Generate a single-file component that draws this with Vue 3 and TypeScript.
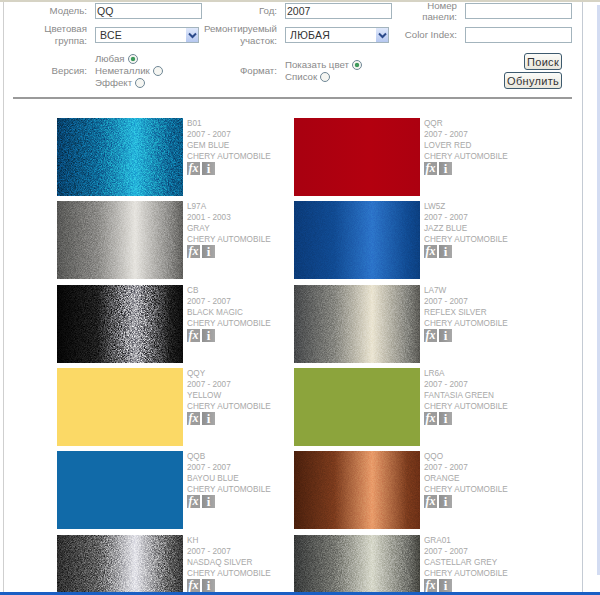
<script setup lang="ts">
interface Paint {
  code: string
  years: string
  name: string
  bg: string
  grain: number
}

// metallic finishes: dark edge, bright band a bit right of centre, dark edge
function sheen(edgeL: string, mid: string, edgeR: string, low = edgeL): string {
  return `linear-gradient(90deg, ${edgeL} 0%, ${low} 32%, ${mid} 62%, ${low} 90%, ${edgeR} 100%)`
}

const paints: Paint[] = [
  { code: 'B01', years: '2007 - 2007', name: 'GEM BLUE', bg: sheen('#07406a', '#26b6dc', '#0a5f8c', '#0e6a98'), grain: 0.5 },
  { code: 'QQR', years: '2007 - 2007', name: 'LOVER RED', bg: 'linear-gradient(90deg, #a80010, #b3000f 60%, #ac0010)', grain: 0 },
  { code: 'L97A', years: '2001 - 2003', name: 'GRAY', bg: sheen('#575755', '#e6e4df', '#605f5c', '#8a8986'), grain: 0.22 },
  { code: 'LW5Z', years: '2007 - 2007', name: 'JAZZ BLUE', bg: sheen('#0a3a78', '#2c74ca', '#0b3f80', '#104a92'), grain: 0.08 },
  { code: 'CB', years: '2007 - 2007', name: 'BLACK MAGIC', bg: sheen('#050505', '#a4a4aa', '#0c0c0c', '#1e1e1e'), grain: 1 },
  { code: 'LA7W', years: '2007 - 2007', name: 'REFLEX SILVER', bg: sheen('#46484a', '#ebe5d2', '#5a5954', '#85857f'), grain: 0.22 },
  { code: 'QQY', years: '2007 - 2007', name: 'YELLOW', bg: '#fbd966', grain: 0 },
  { code: 'LR6A', years: '2007 - 2007', name: 'FANTASIA GREEN', bg: '#8ca43c', grain: 0 },
  { code: 'QQB', years: '2007 - 2007', name: 'BAYOU BLUE', bg: '#116aa8', grain: 0 },
  { code: 'QQO', years: '2007 - 2007', name: 'ORANGE', bg: sheen('#4a1f0c', '#ea9c6a', '#6c2f15', '#7a3a1c'), grain: 0.1 },
  { code: 'KH', years: '2007 - 2007', name: 'NASDAQ SILVER', bg: sheen('#2e2e2e', '#e4e4ea', '#3a3a3a', '#5e5e5e'), grain: 0.7 },
  { code: 'GRA01', years: '2007 - 2007', name: 'CASTELLAR GREY', bg: sheen('#383a3a', '#d8d9cb', '#44443e', '#74756f'), grain: 0.3 }
]
</script>

<template>
  <div class="window">
    <svg class="defs" width="0" height="0">
      <filter id="grain" x="0" y="0" width="100%" height="100%" color-interpolation-filters="sRGB">
        <feTurbulence type="fractalNoise" baseFrequency="1.3" numOctaves="1" seed="9" />
        <feColorMatrix type="saturate" values="0" />
        <feComponentTransfer>
          <feFuncR type="linear" slope="2.4" intercept="-0.7" />
          <feFuncG type="linear" slope="2.4" intercept="-0.7" />
          <feFuncB type="linear" slope="2.4" intercept="-0.7" />
          <feFuncA type="linear" slope="0" intercept="1" />
        </feComponentTransfer>
      </filter>
    </svg>

    <div class="strip-top"></div>

    <div class="middle">
      <main class="content">
        <form class="filters" @submit.prevent>
          <label class="lbl">Модель:</label>
          <div class="field"><input class="txt" type="text" value="QQ" /></div>
          <label class="lbl">Год:</label>
          <div class="field"><input class="txt" type="text" value="2007" /></div>
          <label class="lbl tight">Номер<br />панели:</label>
          <div class="field"><input class="txt" type="text" /></div>

          <label class="lbl">Цветовая<br />группа:</label>
          <div class="field">
            <div class="select-wrap">
              <select class="sel"><option>ВСЕ</option></select>
              <span class="sel-btn">
                <svg width="9" height="7" viewBox="0 0 9 7"><path d="M1 1.5 L4.5 5 L8 1.5" fill="none" stroke="#2b4a8a" stroke-width="2" /></svg>
              </span>
            </div>
          </div>
          <label class="lbl">Ремонтируемый<br />участок:</label>
          <div class="field">
            <div class="select-wrap">
              <select class="sel"><option>ЛЮБАЯ</option></select>
              <span class="sel-btn">
                <svg width="9" height="7" viewBox="0 0 9 7"><path d="M1 1.5 L4.5 5 L8 1.5" fill="none" stroke="#2b4a8a" stroke-width="2" /></svg>
              </span>
            </div>
          </div>
          <label class="lbl">Color Index:</label>
          <div class="field"><input class="txt" type="text" /></div>

          <label class="lbl">Версия:</label>
          <div class="field radios">
            <label class="radio">Любая <input type="radio" name="ver" checked /></label>
            <label class="radio">Неметаллик <input type="radio" name="ver" /></label>
            <label class="radio">Эффект <input type="radio" name="ver" /></label>
          </div>
          <label class="lbl">Формат:</label>
          <div class="field radios">
            <label class="radio">Показать цвет <input type="radio" name="fmt" checked /></label>
            <label class="radio">Список <input type="radio" name="fmt" /></label>
          </div>
          <div class="actions">
            <button class="btn" type="submit">Поиск</button>
            <button class="btn" type="reset">Обнулить</button>
          </div>
        </form>

        <hr class="rule" />

        <section class="paints">
          <article v-for="p in paints" :key="p.code" class="paint">
            <div class="swatch" :style="{ background: p.bg }">
              <svg v-if="p.grain" class="grain" :style="{ opacity: p.grain }" width="126" height="78">
                <rect width="126" height="78" filter="url(#grain)" />
              </svg>
            </div>
            <div class="info">
              <div>{{ p.code }}</div>
              <div>{{ p.years }}</div>
              <div>{{ p.name }}</div>
              <div>CHERY AUTOMOBILE</div>
              <div class="tools">
                <span class="tool fx">fx</span>
                <span class="tool inf">i</span>
              </div>
            </div>
          </article>
        </section>
      </main>
      <aside class="side"><div class="thumb"></div></aside>
    </div>

    <div class="strip-bottom"></div>
  </div>
</template>

<style scoped>
.window { width: 600px; height: 595px; display: flex; flex-direction: column; overflow: hidden; background: #fff; font-family: "Liberation Sans", Arial, sans-serif; }
.defs { position: absolute; }
.strip-top { height: 2px; background: #d6d3c4; flex: none; }
.strip-bottom { height: 3px; background: #1a5fc4; flex: none; position: relative; z-index: 1; }
.middle { flex: 1; min-height: 0; display: flex; }
.content { width: 578px; margin-left: 3px; border-left: 1px solid #cfcfcf; border-right: 1px solid #c4cbd4; flex: none; }
.side { flex: 1; display: flex; justify-content: flex-end; padding: 3px 0 17px; }
.thumb { width: 3px; background: #d3dcf2; }

.filters {
  width: 568px;
  display: grid;
  grid-template-columns: 83px 115px 75px 116px 64px 115px;
  grid-template-rows: 18px 30px 42px;
  align-items: center;
  font-size: 9.7px;
  line-height: 12px;
  color: #8a8a8a;
}
.lbl { text-align: right; white-space: nowrap; }
.tight { line-height: 11px; }
.field { padding-left: 8px; }
.txt { width: 107px; height: 16px; box-sizing: border-box; display: block; border: 1px solid #a3b4bd; padding: 0 1px; font: 10.5px "Liberation Sans", Arial, sans-serif; color: #333; background: #fff; outline: none; }
.select-wrap { position: relative; height: 16px; width: 104px; }
.sel { width: 100%; height: 16px; appearance: none; -webkit-appearance: none; border: 1px solid #a3b4bd; border-radius: 0; padding: 0 4px; font: 10.5px "Liberation Sans", Arial, sans-serif; letter-spacing: 0.3px; color: #333; background: #fff; display: block; }
.sel-btn { position: absolute; right: 1px; top: 1px; bottom: 1px; width: 12px; background: linear-gradient(#dfe8fb, #b6c8f0); display: flex; align-items: center; justify-content: center; pointer-events: none; }

.radios { display: flex; flex-direction: column; }
.radio { display: flex; align-items: center; gap: 3px; height: 12px; white-space: nowrap; }
.radio input { appearance: none; -webkit-appearance: none; width: 8px; height: 8px; margin: 0; border: 1px solid #6f8796; border-radius: 50%; background: #f6f6f2; display: block; box-sizing: content-box; }
.radio input:checked { background: radial-gradient(circle, #3e9a5c 0, #3e9a5c 1.8px, #f6f6f2 2.6px); }

.actions { grid-column: 6; display: flex; flex-direction: column; align-items: flex-end; gap: 2px; justify-self: end; padding-right: 10px; }
.btn { height: 17px; padding: 0 2px; box-sizing: border-box; border: 1px solid #3d5a6e; border-radius: 3px; background: linear-gradient(#fbfbf8, #e9e7dd); font: 11px "Liberation Sans", Arial, sans-serif; letter-spacing: 0.3px; color: #333; cursor: pointer; }

.rule { height: 2px; width: 559px; margin: 5px 0 0 9px; border: 0; background: #9a9a9a; }

.paints { display: grid; grid-template-columns: 237px 237px; grid-auto-rows: 83.33px; padding: 19px 0 0 53px; }
.paint { display: flex; gap: 4px; align-items: flex-start; }
.swatch { position: relative; width: 126px; height: 78px; flex: none; isolation: isolate; overflow: hidden; }
.grain { position: absolute; inset: 0; mix-blend-mode: overlay; }
.info { font-size: 8.2px; line-height: 11px; color: #a8a8a8; white-space: nowrap; }
.tools { display: flex; gap: 2px; }
.tool { width: 13px; height: 13px; background: #9c9c9c; color: #fff; display: flex; align-items: center; justify-content: center; font-family: "Liberation Serif", serif; }
.fx { font-style: italic; font-weight: bold; font-size: 12px; }
.inf { font-weight: bold; font-size: 13px; background: linear-gradient(90deg, #8f8f8f, #a8a8a8); }
</style>
